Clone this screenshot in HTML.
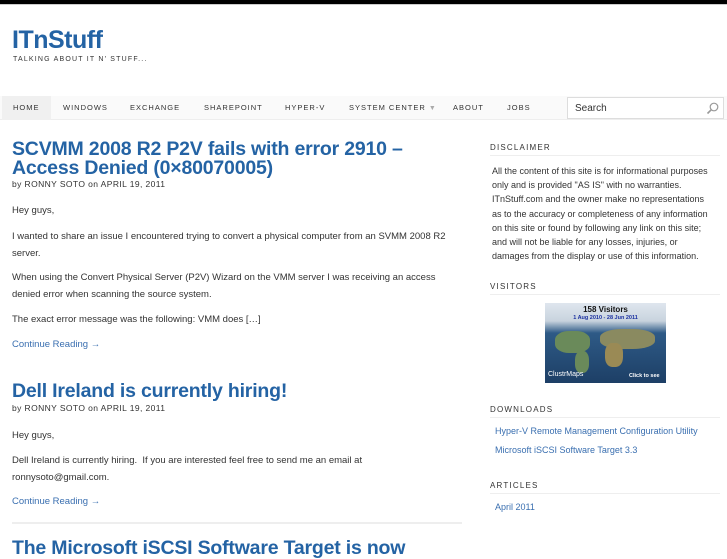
<!DOCTYPE html>
<html><head><meta charset="utf-8"><style>
*{margin:0;padding:0;box-sizing:border-box}
body{width:727px;height:545px;overflow:hidden;background:#fff;font-family:"Liberation Sans",sans-serif;color:#333;position:relative}
.a{position:absolute}
.top{left:0;top:0;width:727px;height:4px;background:#000}
h1{left:12px;top:26px;font-size:25px;color:#2463a4;font-weight:bold;letter-spacing:-0.5px}
.tag{left:13px;top:56px;font-size:7px;letter-spacing:1.2px;color:#333}
.nav{left:0;top:96px;width:727px;height:24px;background:#fafafa;border-bottom:1px solid #eee}
.nav span{position:absolute;top:7px;font-size:7.5px;letter-spacing:1px;color:#333}
.home{left:2px;top:96px;width:49px;height:24px;background:#f0f0f0}
.search{left:567px;top:97px;width:157px;height:22px;border:1px solid #ddd;background:#fff;font-size:10px;padding:5px 7px;color:#333}
.pt{left:12px;font-size:19.5px;font-weight:bold;color:#2463a4;line-height:19px;letter-spacing:-0.2px}
.by{left:12px;font-size:8.5px;color:#333;letter-spacing:.4px}
.p{left:12px;font-size:9.5px;line-height:17px;color:#333;width:450px}
.cr{left:12px;font-size:9.5px;color:#3a6fb0}
.wt{left:490px;font-size:8px;letter-spacing:1.2px;color:#333}
.wl{left:490px;width:230px;height:1px;background:#eee}
.sl{left:495px;font-size:9px;color:#3a6fb0}
</style></head><body>
<div class="a top"></div>
<div class="a" style="left:0;top:4px;width:727px;height:1px;background:#ccc"></div>
<h1 class="a">ITnStuff</h1>
<div class="a tag">TALKING ABOUT IT N' STUFF...</div>
<div class="a nav"></div>
<div class="a home"></div>
<div class="a nav" style="background:none;border:none">
<span style="left:13px">HOME</span><span style="left:63px">WINDOWS</span><span style="left:130px">EXCHANGE</span><span style="left:204px">SHAREPOINT</span><span style="left:285px">HYPER-V</span><span style="left:349px">SYSTEM CENTER <span style="position:static;color:#aaa;font-size:7px">▼</span></span><span style="left:453px">ABOUT</span><span style="left:507px">JOBS</span>
</div>
<div class="a search">Search<svg class="a" style="right:4px;top:4px" width="13" height="13" viewBox="0 0 13 13"><circle cx="8" cy="5" r="3.8" fill="none" stroke="#999" stroke-width="1.2"/><path d="M5.3 7.7L1.5 11.5" stroke="#999" stroke-width="1.6"/></svg></div>

<div class="a pt" style="top:140px">SCVMM 2008 R2 P2V fails with error 2910 –<br>Access Denied (0×80070005)</div>
<div class="a by" style="top:179px">by RONNY SOTO on APRIL 19, 2011</div>
<div class="a p" style="top:202px">Hey guys,</div>
<div class="a p" style="top:228px">I wanted to share an issue I encountered trying to convert a physical computer from an SVMM 2008 R2 server.</div>
<div class="a p" style="top:269px">When using the Convert Physical Server (P2V) Wizard on the VMM server I was receiving an access denied error when scanning the source system.</div>
<div class="a p" style="top:311px">The exact error message was the following: VMM does […]</div>
<div class="a cr" style="top:339px">Continue Reading →</div>

<div class="a pt" style="top:382px">Dell Ireland is currently hiring!</div>
<div class="a by" style="top:403px">by RONNY SOTO on APRIL 19, 2011</div>
<div class="a p" style="top:427px">Hey guys,</div>
<div class="a p" style="top:452px">Dell Ireland is currently hiring.&nbsp; If you are interested feel free to send me an email at ronnysoto@gmail.com.</div>
<div class="a cr" style="top:496px">Continue Reading →</div>
<div class="a" style="left:12px;top:522px;width:450px;height:2px;background:#eee"></div>
<div class="a pt" style="top:539px">The Microsoft iSCSI Software Target is now</div>

<div class="a wt" style="top:143px">DISCLAIMER</div>
<div class="a wl" style="top:155px"></div>
<div class="a" style="left:492px;top:164px;width:220px;font-size:9px;line-height:14.2px;color:#333">All the content of this site is for informational purposes only and is provided "AS IS" with no warranties. ITnStuff.com and the owner make no representations as to the accuracy or completeness of any information on this site or found by following any link on this site; and will not be liable for any losses, injuries, or damages from the display or use of this information.</div>
<div class="a wt" style="top:282px">VISITORS</div>
<div class="a wl" style="top:294px"></div>
<div class="a" style="left:545px;top:303px;width:121px;height:80px;background:linear-gradient(#dfe6ee 0,#c8d3de 18px,#2e5a86 30px,#1d3f66 100%);overflow:hidden">
<div class="a" style="left:0;top:2px;width:121px;text-align:center;font-size:8px;font-weight:bold;color:#111">158 Visitors</div>
<div class="a" style="left:0;top:12px;width:121px;text-align:center;font-size:5.5px;font-weight:bold;color:#1a2fa0">1 Aug 2010 - 28 Jun 2011</div>
<div class="a" style="left:10px;top:28px;width:35px;height:22px;background:#6a8a5a;border-radius:40%"></div>
<div class="a" style="left:30px;top:48px;width:14px;height:22px;background:#6a8a5a;border-radius:40%"></div>
<div class="a" style="left:55px;top:26px;width:55px;height:20px;background:#8a8a60;border-radius:40%"></div>
<div class="a" style="left:60px;top:40px;width:18px;height:24px;background:#9a8a55;border-radius:40%"></div>
<div class="a" style="left:3px;top:68px;font-size:7px;color:#fff">ClustrMaps</div>
<div class="a" style="left:84px;top:70px;font-size:5.5px;color:#fff;font-weight:bold">Click to see</div>
</div>
<div class="a wt" style="top:405px">DOWNLOADS</div>
<div class="a wl" style="top:417px"></div>
<div class="a sl" style="top:426px">Hyper-V Remote Management Configuration Utility</div>
<div class="a sl" style="top:445px">Microsoft iSCSI Software Target 3.3</div>
<div class="a wt" style="top:481px">ARTICLES</div>
<div class="a wl" style="top:493px"></div>
<div class="a sl" style="top:502px">April 2011</div>
</body></html>
